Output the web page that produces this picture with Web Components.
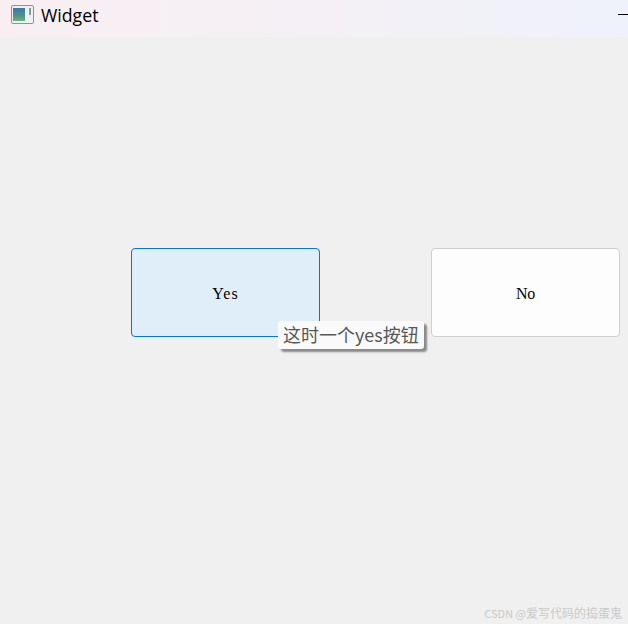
<!DOCTYPE html>
<html>
<head>
<meta charset="utf-8">
<style>
html,body{margin:0;height:100%;background:#f0f0f0;overflow:hidden;}
</style>
</head>
<body>
<qt-window>
<span slot="title">Widget</span>
<qt-button active style="--track:1px">Yes<qt-tooltip slot="tip">这时一个yes按钮</qt-tooltip></qt-button>
<qt-button style="--track:-.4px">No</qt-button>
</qt-window>
<script>
class QtWindow extends HTMLElement{
    constructor(){
        super();
        this.attachShadow({mode:'open'});
        this.shadowRoot.innerHTML=`
        <style>
        :host{display:flex;flex-direction:column;position:relative;width:628px;height:624px;background:#f0f0f0;overflow:hidden;}
        header{display:flex;align-items:center;box-sizing:border-box;height:37px;flex:none;padding:0 0 7px 11px;gap:7px;
            background:linear-gradient(90deg,#f9eff2 0%,#f5f0f5 45%,#eff2fb 100%);
            font:17.7px "Open Sans","Liberation Sans",sans-serif;color:#000;position:relative;}
        header svg{display:block;margin-top:-2px;}
        .min{position:absolute;right:0;top:14px;width:10px;height:1px;background:#000;}
        main{display:flex;gap:111px;padding:211px 0 0 131px;}
        .mark{position:absolute;right:6px;bottom:3px;font:12px/16px "Noto Sans CJK SC","Liberation Sans",sans-serif;color:#c9c9c9;}
        .mark span{font-size:11px;}
        </style>
        <header>
            <svg width="23" height="19" viewBox="0 0 23 19">
                <defs><linearGradient id="g" x1="0" y1="0" x2="0" y2="1">
                    <stop offset="0" stop-color="#3b78a8"/><stop offset=".6" stop-color="#4f9488"/><stop offset="1" stop-color="#6fae7c"/>
                </linearGradient></defs>
                <rect x=".5" y=".5" width="22" height="18" rx="1.5" fill="#eef1f3" stroke="#8d9499"/>
                <rect x="2" y="3" width="12" height="13" fill="url(#g)"/>
                <rect x="18" y="3" width="2" height="7" fill="#8a979d"/>
            </svg>
            <slot name="title"></slot>
            <div class="min"></div>
        </header>
        <main><slot></slot></main>
        <div class="mark"><span>CSDN @</span>爱写代码的捣蛋鬼</div>
        `;
    }
}
class QtButton extends HTMLElement{
    constructor(){
        super();
        this.attachShadow({mode:'open'});
        this.shadowRoot.innerHTML=`
        <style>
        :host{display:flex;position:relative;align-items:center;justify-content:center;box-sizing:border-box;
            width:189px;height:89px;padding-top:2px;background:#fdfdfd;border:1px solid #cfcfcf;border-radius:4px;
            font:16px "Liberation Serif",serif;letter-spacing:var(--track,0);color:#000;}
        :host([active]){background:#e0eef9;border-color:#0078d4;}
        </style>
        <slot></slot><slot name="tip"></slot>
        `;
    }
}
class QtTooltip extends HTMLElement{
    constructor(){
        super();
        this.attachShadow({mode:'open'});
        this.shadowRoot.innerHTML=`
        <style>
        :host{position:absolute;left:146px;top:72px;box-sizing:border-box;height:28px;padding:0 5px;white-space:nowrap;letter-spacing:0;
            background:#fafafa;border-radius:3px;box-shadow:3px 3px 2px #8a8a8a;
            font:18px/27px "Noto Sans CJK SC","Liberation Sans",sans-serif;color:#575757;}
        </style>
        <slot></slot>
        `;
    }
}
customElements.define("qt-window",QtWindow);
customElements.define("qt-button",QtButton);
customElements.define("qt-tooltip",QtTooltip);
</script>
</body>
</html>
